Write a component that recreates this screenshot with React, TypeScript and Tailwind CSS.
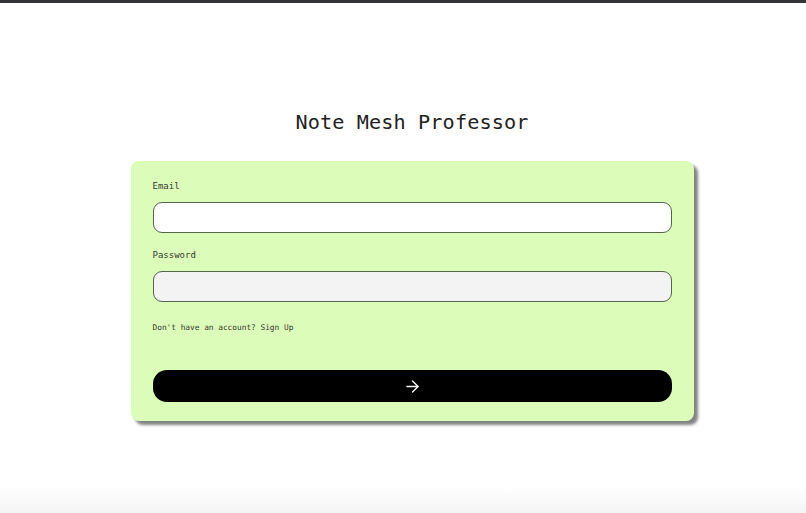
import React from 'react';
import { ArrowRight } from 'lucide-react';

const mono = { fontFamily: '"DejaVu Sans Mono", "Liberation Mono", monospace' };

export default function App() {
  return (
    <div className="flex h-[513px] w-full flex-col bg-white" style={mono}>
      {/* window top edge */}
      <div className="h-[3px] w-full shrink-0 bg-[#333438]" />

      <main className="flex flex-1 flex-col items-center pl-[18px]">
        <h1 className="mt-[105px] h-[28px] text-[20.2px] leading-[28px] tracking-[0.1px] text-[#222]">
          Note Mesh Professor
        </h1>

        <form
          className="mt-[25px] flex w-[563px] flex-col rounded-[8px] bg-[#dcfcb9] px-[22px] pt-[19px] pb-[19px] shadow-[4px_4px_3px_rgba(90,90,90,0.75)]"
          onSubmit={(e) => e.preventDefault()}
        >
          <label className="h-[12px] text-[9px] leading-[12px] text-[#333a30]">Email</label>
          <input
            type="email"
            className="mt-[10px] h-[31px] w-full rounded-[9px] border border-[#56634d] bg-white px-3 text-[11px] outline-none"
          />

          <label className="mt-[16px] h-[12px] text-[9px] leading-[12px] text-[#333a30]">Password</label>
          <input
            type="password"
            className="mt-[10px] h-[31px] w-full rounded-[9px] border border-[#56634d] bg-[#f3f3f3] px-3 text-[11px] outline-none"
          />

          <p className="mt-[21px] h-[10px] text-[7.8px] leading-[10px] text-[#333a30]">
            Don't have an account? Sign Up
          </p>

          <button
            type="submit"
            className="mt-[37px] flex h-[32px] w-full items-center justify-center rounded-[14px] bg-black text-white"
            aria-label="Sign in"
          >
            <ArrowRight size={19} strokeWidth={1.7} />
          </button>
        </form>
      </main>

      <div className="h-[26px] w-full shrink-0 bg-gradient-to-b from-white to-[#f4f4f4]" />
    </div>
  );
}
